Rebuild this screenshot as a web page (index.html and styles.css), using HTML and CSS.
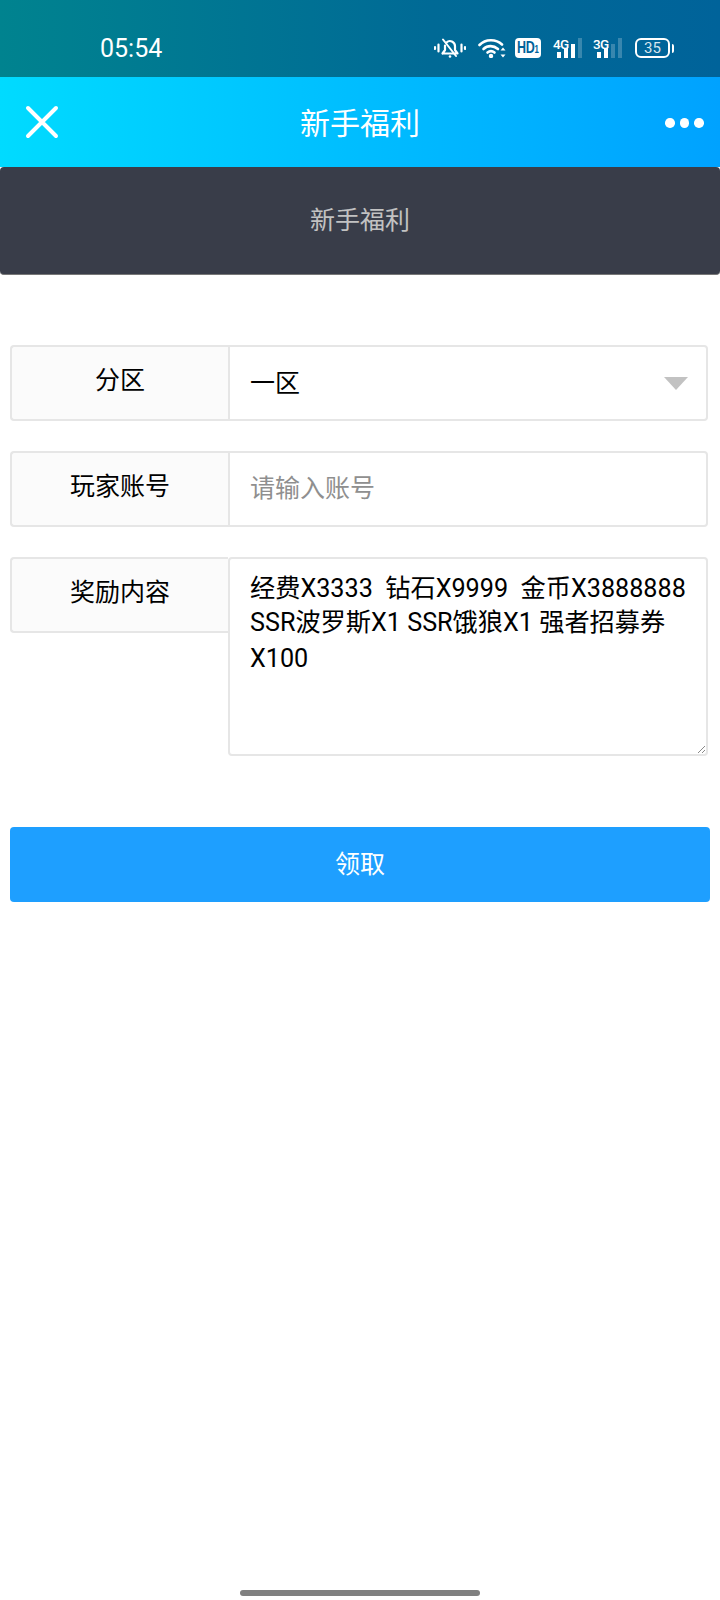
FILE: index.html
```html
<!DOCTYPE html>
<html lang="zh-CN">
<head>
<meta charset="utf-8">
<title>新手福利</title>
<link rel="stylesheet" href="styles.css">
</head>
<body>
<div class="status">
  <span class="time">05:54</span>
  <div class="status-icons">
    <svg class="i-bell" width="32" height="20" viewBox="0 0 32 20" fill="none" stroke="#fff" stroke-width="2.200" stroke-linecap="round" stroke-linejoin="round">
      <path d="M1 9v2M4.500 6.500v7M27.500 6.500v7M31 9v2"/>
      <path d="M8.500 15.500h15l-2.500-3.500V8a5 5 0 0 0-8.500-3.500M11 7.500V12L8.500 15.500"/>
      <path d="M9 1.500l13 16.500" stroke-width="2"/>
      <circle cx="16" cy="18.500" r="1.300" fill="#fff" stroke="none"/>
    </svg>
    <svg class="i-wifi" width="28" height="20" viewBox="0 0 28 20" fill="none" stroke="#fff" stroke-width="2.600" stroke-linecap="round">
      <path d="M1.500 7C7.500 .8 18 .8 24 6.500"/>
      <path d="M5.500 11c4-3.800 10-3.800 14.500 0"/>
      <path d="M9.500 14.500c2.200-1.800 4.800-1.800 7 0"/>
      <circle cx="13" cy="18" r="2.200" fill="#fff" stroke="none"/>
      <path d="M25 9.500l2.500 3h-5zM25 19.500l2.500-3h-5z" fill="#fff" stroke="none"/>
    </svg>
    <div class="hd"><span class="hd-text">HD<small>1</small></span></div>
    <div class="net net-4g">
      <span class="net-label">4G</span>
      <div class="bars">
        <i class="b1"></i><i class="b2"></i><i class="b3"></i><i class="b4 dim"></i>
      </div>
    </div>
    <div class="net net-3g">
      <span class="net-label">3G</span>
      <div class="bars">
        <i class="b1"></i><i class="b2"></i><i class="b3 dim"></i><i class="b4 dim"></i>
      </div>
    </div>
    <div class="battery"><div class="battery-body">35</div><div class="battery-cap"></div></div>
  </div>
</div>

<header class="nav">
  <svg class="close" width="34" height="34" viewBox="0 0 34 34" fill="none" stroke="#fff" stroke-width="4" stroke-linecap="round">
    <path d="M3 3l28 28M31 3L3 31"/>
  </svg>
  <h1 class="nav-title">新手福利</h1>
  <div class="more"><i></i><i></i><i></i></div>
</header>

<div class="banner">新手福利</div>

<main class="form">
  <div class="group">
    <div class="label">分区</div>
    <div class="field select">
      <span class="select-value">一区</span>
      <span class="caret"></span>
    </div>
  </div>
  <div class="group">
    <div class="label">玩家账号</div>
    <div class="field placeholder">请输入账号</div>
  </div>
  <div class="group group-top">
    <div class="label">奖励内容</div>
    <div class="area">
      <div class="line">经费X3333&nbsp; 钻石X9999&nbsp; 金币X3888888</div>
      <div class="line">SSR波罗斯X1 SSR饿狼X1 强者招募券</div>
      <div class="line line-latin">X100</div>
      <svg class="resizer" width="8" height="8" viewBox="0 0 8 8" stroke="#8a8a8a" stroke-width="1"><path d="M1 8l7-7M5 8l3-3"/></svg>
    </div>
  </div>
  <button class="submit" type="button">领取</button>
</main>

<div class="home-bar"></div>
</body>
</html>
```
FILE: styles.css
```css
* { box-sizing: border-box; }
html, body { margin: 0; padding: 0; }
body {
  width: 720px;
  height: 1600px;
  background: #fff;
  color: #000;
  font-family: Roboto, "Noto Sans CJK SC", sans-serif;
  position: relative;
  overflow: hidden;
}
.status {
  height: 77px;
  background: linear-gradient(90deg, #00838f 0%, #006a96 60%, #00639a 100%);
  position: relative;
  color: #fff;
}
.time {
  position: absolute;
  left: 100px;
  top: 33px;
  font-size: 25px;
  line-height: 32px;
}
.status-icons {
  position: absolute;
  left: 434px;
  top: 38px;
  height: 20px;
  display: flex;
  align-items: flex-start;
}
.i-bell { margin-right: 12px; }
.i-wifi { margin-right: 9px; }
.hd {
  width: 26px;
  height: 20px;
  background: #fff;
  border-radius: 4px;
  color: #00639a;
  font: 700 16px/20px "Liberation Sans", sans-serif;
  text-align: center;
  margin-right: 12px;
  display: flex;
  justify-content: center;
  overflow: hidden;
}
.hd-text { display: inline-block; flex: none; transform: scaleX(.78); letter-spacing: -.3px; }
.hd small { font-size: 10px; }
.net { position: relative; width: 30px; height: 20px; margin-right: 10px; }
.net-label {
  position: absolute;
  left: 0;
  top: -1px;
  color: #fff;
  font: 500 13.500px/14px Roboto, sans-serif;
  letter-spacing: -.6px;
}
.bars {
  position: absolute;
  left: 4px;
  right: 0;
  bottom: 0;
  height: 20px;
  display: flex;
  gap: 3px;
  align-items: flex-end;
}
.bars i { width: 4px; background: #fff; display: block; }
.bars .b1 { height: 6px; }
.bars .b2 { height: 10px; }
.bars .b3 { height: 14px; }
.bars .b4 { height: 20px; }
.bars .dim { background: rgba(255, 255, 255, .22); }
.net-3g { margin-right: 12px; }
.battery { display: flex; align-items: center; height: 20px; }
.battery-body {
  width: 35px;
  height: 20px;
  border: 2px solid #fff;
  border-radius: 6px;
  font: 400 15px/16px Roboto, sans-serif;
  color: rgba(255, 255, 255, .85);
  text-align: center;
}
.battery-cap { width: 2.500px; height: 9px; margin-left: 1.500px; background: #fff; border-radius: 0 2px 2px 0; }

.nav {
  height: 90px;
  padding-top: 3px;
  background: linear-gradient(90deg, #00dbff 0%, #00bdff 50%, #00a2ff 100%);
  position: relative;
  display: flex;
  align-items: center;
  justify-content: center;
  color: #fff;
}
.nav-title { margin: 0; font-weight: 400; font-size: 30px; line-height: 40px; }
.close { position: absolute; left: 25px; top: 28px; }
.more { position: absolute; left: 665px; top: 41px; display: flex; gap: 5px; }
.more i { width: 9.500px; height: 9.500px; border-radius: 50%; background: #fff; display: block; }

.banner {
  height: 108px;
  background: #393d49;
  border-radius: 4px;
  border-bottom: 1px solid #777;
  color: #c2c2c2;
  font-size: 25px;
  line-height: 107px;
  text-align: center;
}

.form { padding: 70px 10px 0; }
.group {
  display: flex;
  height: 76px;
  margin: 0 2px 30px 0;
}
.group-top { height: 199px; align-items: flex-start; margin-bottom: 71px; }
.label {
  width: 218px;
  height: 76px;
  flex: none;
  background: #fbfbfb;
  border: 2px solid #e6e6e6;
  border-right: 0;
  border-radius: 4px 0 0 4px;
  font-size: 25px;
  line-height: 68px;
  text-align: center;
}
.field {
  flex: 1;
  height: 76px;
  border: 2px solid #e6e6e6;
  border-radius: 0 4px 4px 0;
  padding-left: 20px;
  font-size: 25px;
  line-height: 72px;
}
.select { display: flex; justify-content: space-between; align-items: center; padding-right: 18px; }
.select-value { padding-top: 2px; }
.caret {
  width: 0;
  height: 0;
  border-left: 12px solid transparent;
  border-right: 12px solid transparent;
  border-top: 13px solid #c2c2c2;
}
.placeholder { color: #8f8f8f; }
.area {
  flex: 1;
  height: 199px;
  border: 2px solid #e6e6e6;
  border-radius: 4px;
  padding: 13px 0 0 20px;
  font-size: 25.200px;
  line-height: 34px;
  position: relative;
  white-space: nowrap;
}
.line-latin { margin-top: 2px; }
.resizer { position: absolute; right: 1px; bottom: 1px; }
.submit {
  display: block;
  width: 700px;
  height: 75px;
  margin: 0;
  padding: 0;
  border: 0;
  border-radius: 4px;
  background: #1e9fff;
  color: #fff;
  font-family: Roboto, "Noto Sans CJK SC", sans-serif;
  font-size: 25px;
  line-height: 75px;
}
.home-bar {
  position: absolute;
  left: 240px;
  top: 1590px;
  width: 240px;
  height: 6px;
  border-radius: 3px;
  background: #808080;
}
```
